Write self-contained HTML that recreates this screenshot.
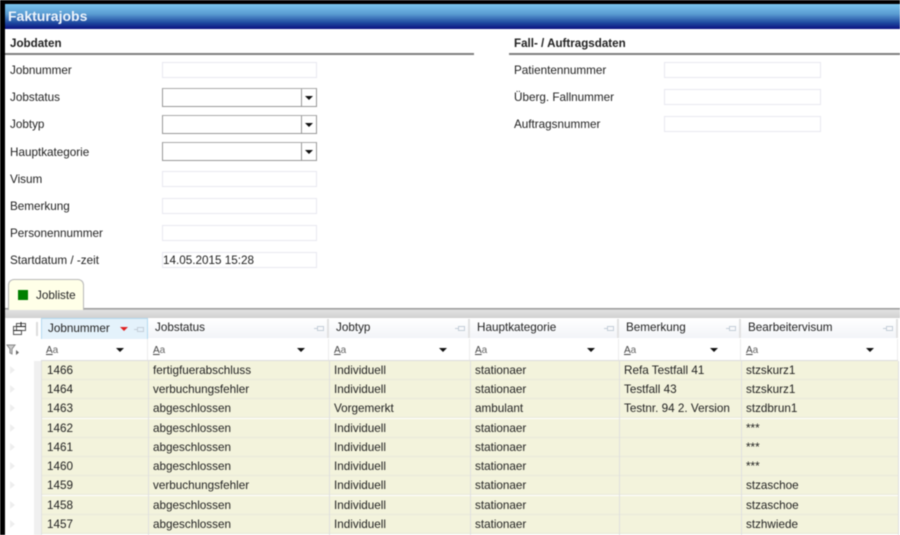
<!DOCTYPE html>
<html><head><meta charset="utf-8"><style>
html,body{margin:0;padding:0;background:#fff}
#p{position:relative;width:900px;height:535px;overflow:hidden;background:#fff;font:11.7px/14px "Liberation Sans",sans-serif;color:#222;filter:blur(.4px)}
#p div{position:absolute;white-space:nowrap}
.l{left:10px}
.b{font-weight:bold;font-size:11.6px}
.i{width:153px;height:14px;border:1px solid #e8e8f0;background:#fff}
.s{left:162px;width:153px;height:17px;border:1px solid #999;border-color:#aaa #999 #999 #999;background:#fff}
.s i{position:absolute;right:14px;top:0;bottom:0;width:1px;background:#999}
.s b,.dd{position:absolute;width:0;height:0;border-left:4px solid transparent;border-right:4px solid transparent;border-top:4px solid #111}
.s b{right:3px;top:7px}
.h{top:319px;height:19px;background:linear-gradient(#fff,#f2f4f8);border-right:2px solid #e2e2e2}
.h span{position:absolute;left:7px;top:2px;color:#222}
.pin{position:absolute;right:3px;top:7px;width:7px;height:5px;border:1px solid #c4ced8;box-sizing:border-box}
.pin:before{content:"";position:absolute;left:-4px;top:1px;width:3px;height:1px;background:#c4ced8}
.f{top:339px;height:21px;background:#fff;border-right:1px solid #ececec}
.f span{position:absolute;left:5px;top:5px;font-size:10px;color:#666}
.f span u{text-decoration:underline;color:#444}
.r{left:41px;width:857px;height:18px;background:#f3f3dc;border-bottom:1px solid #e8e8da}
.t{line-height:20px}
.sep{width:1px;background:#e0e0e0;top:361px;height:174px}
.tri{left:10px;width:0;height:0;border-left:5px solid #eee;border-top:4px solid transparent;border-bottom:4px solid transparent}
</style></head><body><div id="p">
<div style="left:0;top:0;width:900px;height:4px;background:#000"></div>
<div style="left:0;top:0;width:5px;height:535px;background:#000"></div>
<div style="left:5px;top:4px;width:895px;height:25px;background:linear-gradient(#7cc6ee,#5a9cd2 40%,#1f4aa0 75%,#0a1080)"></div>
<div style="left:8px;top:9px;font-size:14px;font-weight:bold;line-height:15px;color:#eef4fb">Fakturajobs</div>

<div class="b l" style="top:37px">Jobdaten</div>
<div style="left:5px;top:53px;width:469px;height:2px;background:#7f7f7f"></div>
<div class="b" style="left:514px;top:37px">Fall- / Auftragsdaten</div>
<div style="left:509px;top:53px;width:391px;height:2px;background:#7f7f7f"></div>

<div class="l" style="top:64px">Jobnummer</div>
<div class="l" style="top:91px">Jobstatus</div>
<div class="l" style="top:118px">Jobtyp</div>
<div class="l" style="top:146px">Hauptkategorie</div>
<div class="l" style="top:173px">Visum</div>
<div class="l" style="top:200px">Bemerkung</div>
<div class="l" style="top:227px">Personennummer</div>
<div class="l" style="top:254px">Startdatum / -zeit</div>

<div class="i" style="left:162px;top:62px"></div>
<div class="s" style="top:88px"><i></i><b></b></div>
<div class="s" style="top:115px"><i></i><b></b></div>
<div class="s" style="top:142px"><i></i><b></b></div>
<div class="i" style="left:162px;top:171px"></div>
<div class="i" style="left:162px;top:198px"></div>
<div class="i" style="left:162px;top:225px"></div>
<div class="i" style="left:162px;top:252px;line-height:16px;color:#222">14.05.2015 15:28</div>

<div style="left:514px;top:64px">Patientennummer</div>
<div style="left:514px;top:91px">Überg. Fallnummer</div>
<div style="left:514px;top:118px">Auftragsnummer</div>
<div class="i" style="left:664px;top:62px;width:155px"></div>
<div class="i" style="left:664px;top:89px;width:155px"></div>
<div class="i" style="left:664px;top:116px;width:155px"></div>

<div style="left:5px;top:308px;width:895px;height:10px;background:linear-gradient(#9a9a9a 0,#9a9a9a 1px,#e2e2e2 2px,#d0d0d0 100%)"></div>
<div style="left:8px;top:279px;width:74px;height:30px;background:#ffffe8;border:1px solid #b8b8b8;border-bottom:0;border-radius:6px 6px 0 0"></div>
<div style="left:18px;top:290px;width:10px;height:10px;background:#008000"></div>
<div style="left:36px;top:289px">Jobliste</div>

<!-- gutter -->
<div style="left:34px;top:361px;width:7px;height:174px;background:#f0f0f0"></div>
<svg style="position:absolute;left:12px;top:321px" width="16" height="15" viewBox="0 0 16 15" fill="none" stroke="#555"><rect x="1.500" y="5.500" width="8" height="8"/><rect x="4.500" y="2.500" width="9" height="7" fill="#fff"/><path d="M4.500 5.500h9M1.500 9.500h8M9 1v4" stroke="#222"/></svg>
<div style="left:36px;top:322px;width:2px;height:14px;background:#ddd"></div>
<svg style="position:absolute;left:6px;top:344px" width="14" height="12" viewBox="0 0 14 12"><path d="M1 1h8L6 5v5L4 9V5z" fill="#ccc" stroke="#888"/><path d="M10 6l3 2.500-3 2.500z" fill="#666"/></svg>

<!-- header -->
<div class="h" style="left:41px;width:105px;background:#e4f2fb;border:1px solid #b4daf0;top:318px;height:20px"><span style="left:6px;top:3px">Jobnummer</span><div style="position:absolute;left:78px;top:8px;width:0;height:0;border-left:4px solid transparent;border-right:4px solid transparent;border-top:4px solid #e02020"></div><div class="pin" style="top:8px"></div></div>
<div class="h" style="left:148px;width:179px"><span>Jobstatus</span><div class="pin"></div></div>
<div class="h" style="left:329px;width:139px"><span>Jobtyp</span><div class="pin"></div></div>
<div class="h" style="left:470px;width:147px"><span>Hauptkategorie</span><div class="pin"></div></div>
<div class="h" style="left:619px;width:120px"><span>Bemerkung</span><div class="pin"></div></div>
<div class="h" style="left:741px;width:155px"><span>Bearbeitervisum</span><div class="pin"></div></div>

<!-- filter -->
<div class="f" style="left:41px;width:106px"><span><u>A</u>a</span><div class="dd" style="left:75px;top:9px"></div></div>
<div class="f" style="left:148px;width:180px"><span><u>A</u>a</span><div class="dd" style="left:149px;top:9px"></div></div>
<div class="f" style="left:329px;width:140px"><span><u>A</u>a</span><div class="dd" style="left:110px;top:9px"></div></div>
<div class="f" style="left:470px;width:148px"><span><u>A</u>a</span><div class="dd" style="left:117px;top:9px"></div></div>
<div class="f" style="left:619px;width:121px"><span><u>A</u>a</span><div class="dd" style="left:91px;top:9px"></div></div>
<div class="f" style="left:741px;width:156px"><span><u>A</u>a</span><div class="dd" style="left:125px;top:9px"></div></div>
<div style="left:41px;top:360px;width:857px;height:1px;background:#ddd"></div>

<!-- rows -->
<div class="r" style="top:361px"></div><div class="r" style="top:380px"></div><div class="r" style="top:399px"></div><div class="r" style="top:419px"></div><div class="r" style="top:438px"></div><div class="r" style="top:457px"></div><div class="r" style="top:476px"></div><div class="r" style="top:496px"></div><div class="r" style="top:515px"></div>
<div class="sep" style="left:148px"></div><div class="sep" style="left:329px"></div><div class="sep" style="left:470px"></div><div class="sep" style="left:619px"></div><div class="sep" style="left:741px"></div>
<div style="left:41px;top:361px;width:1px;height:174px;background:#e0e0e0"></div>
<div style="left:898px;top:361px;width:1px;height:174px;background:#e0e0e0"></div>

<div class="tri" style="top:366px"></div><div class="tri" style="top:385px"></div><div class="tri" style="top:404px"></div><div class="tri" style="top:424px"></div><div class="tri" style="top:443px"></div><div class="tri" style="top:462px"></div><div class="tri" style="top:481px"></div><div class="tri" style="top:501px"></div><div class="tri" style="top:520px"></div>

<div class="t" style="left:47px;top:361px">1466</div><div class="t" style="left:153px;top:361px">fertigfuerabschluss</div><div class="t" style="left:334px;top:361px">Individuell</div><div class="t" style="left:475px;top:361px">stationaer</div><div class="t" style="left:624px;top:361px">Refa Testfall 41</div><div class="t" style="left:746px;top:361px">stzskurz1</div>
<div class="t" style="left:47px;top:380px">1464</div><div class="t" style="left:153px;top:380px">verbuchungsfehler</div><div class="t" style="left:334px;top:380px">Individuell</div><div class="t" style="left:475px;top:380px">stationaer</div><div class="t" style="left:624px;top:380px">Testfall 43</div><div class="t" style="left:746px;top:380px">stzskurz1</div>
<div class="t" style="left:47px;top:399px">1463</div><div class="t" style="left:153px;top:399px">abgeschlossen</div><div class="t" style="left:334px;top:399px">Vorgemerkt</div><div class="t" style="left:475px;top:399px">ambulant</div><div class="t" style="left:624px;top:399px">Testnr. 94 2. Version</div><div class="t" style="left:746px;top:399px">stzdbrun1</div>
<div class="t" style="left:47px;top:419px">1462</div><div class="t" style="left:153px;top:419px">abgeschlossen</div><div class="t" style="left:334px;top:419px">Individuell</div><div class="t" style="left:475px;top:419px">stationaer</div><div class="t" style="left:746px;top:419px">***</div>
<div class="t" style="left:47px;top:438px">1461</div><div class="t" style="left:153px;top:438px">abgeschlossen</div><div class="t" style="left:334px;top:438px">Individuell</div><div class="t" style="left:475px;top:438px">stationaer</div><div class="t" style="left:746px;top:438px">***</div>
<div class="t" style="left:47px;top:457px">1460</div><div class="t" style="left:153px;top:457px">abgeschlossen</div><div class="t" style="left:334px;top:457px">Individuell</div><div class="t" style="left:475px;top:457px">stationaer</div><div class="t" style="left:746px;top:457px">***</div>
<div class="t" style="left:47px;top:476px">1459</div><div class="t" style="left:153px;top:476px">verbuchungsfehler</div><div class="t" style="left:334px;top:476px">Individuell</div><div class="t" style="left:475px;top:476px">stationaer</div><div class="t" style="left:746px;top:476px">stzaschoe</div>
<div class="t" style="left:47px;top:496px">1458</div><div class="t" style="left:153px;top:496px">abgeschlossen</div><div class="t" style="left:334px;top:496px">Individuell</div><div class="t" style="left:475px;top:496px">stationaer</div><div class="t" style="left:746px;top:496px">stzaschoe</div>
<div class="t" style="left:47px;top:515px">1457</div><div class="t" style="left:153px;top:515px">abgeschlossen</div><div class="t" style="left:334px;top:515px">Individuell</div><div class="t" style="left:475px;top:515px">stationaer</div><div class="t" style="left:746px;top:515px">stzhwiede</div>
</div></body></html>
